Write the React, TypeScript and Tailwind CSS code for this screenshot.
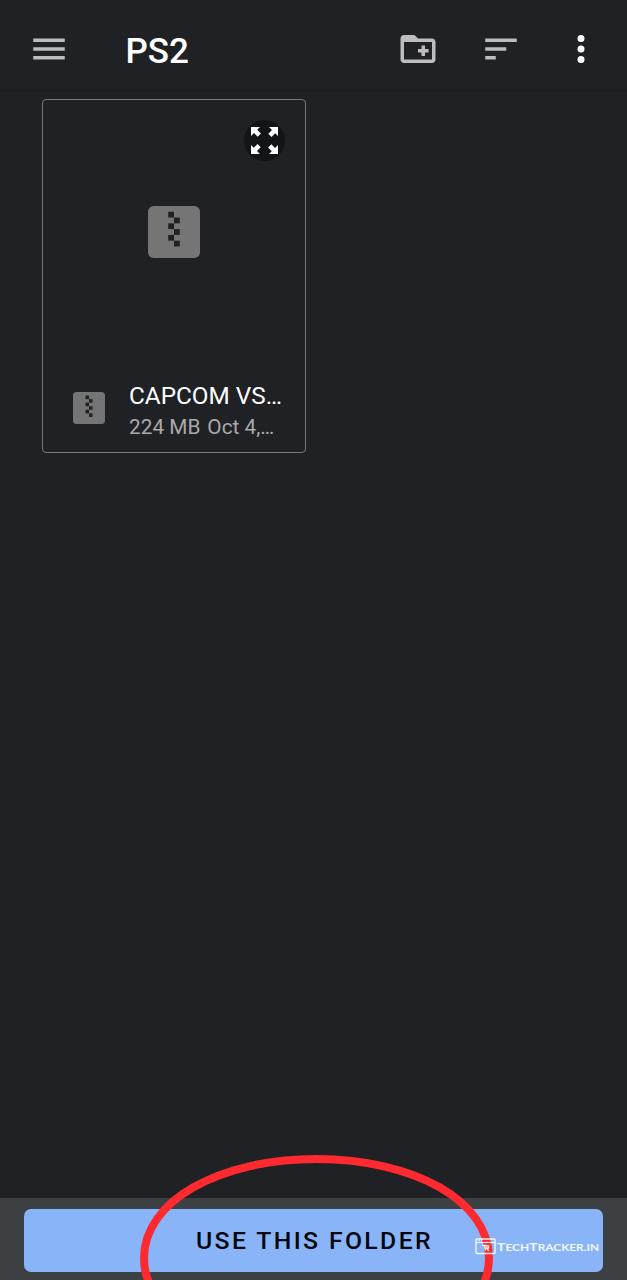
import type { ReactNode } from "react";

function Icon({ children, className }: { children: ReactNode; className?: string }) {
  return (
    <svg viewBox="0 0 24 24" className={`size-[42px] fill-[#bdbdbd] ${className ?? ""}`}>
      {children}
    </svg>
  );
}

function ZipIcon({ className }: { className: string }) {
  return (
    <svg viewBox="0 0 18 18" className={className}>
      <rect width="18" height="18" rx="2" fill="#757575" />
      {[2, 4, 6, 8, 10, 12].map((y, i) => (
        <rect key={y} x={i % 2 ? 9 : 7} y={y} width="2" height="2" fill="#202124" />
      ))}
    </svg>
  );
}

function TopBar() {
  return (
    <header className="flex h-[91px] items-start border-b border-[#1c1d1f] pt-7 pr-[25px] pl-[27.5px]">
      <button aria-label="Menu" className="h-[42px]">
        <Icon>
          <path d="M3 18h18v-2H3v2zm0-5h18v-2H3v2zm0-7v2h18V6H3z" />
        </Icon>
      </button>
      <h1 className="ml-[56px] flex-1 pt-[2px] text-[35px] leading-[44px] font-medium text-white">PS2</h1>
      <button aria-label="New folder" className="mr-[41.5px] h-[42px]">
        <Icon>
          <path
            fillRule="evenodd"
            d="M20 6h-8l-2-2H4c-1.11 0-1.99.89-1.99 2L2 18c0 1.11.89 2 2 2h16c1.11 0 2-.89 2-2V8c0-1.11-.89-2-2-2zm0 12H4V8h16v10zM12 14h2v2h2v-2h2v-2h-2v-2h-2v2h-2v2z"
          />
        </Icon>
      </button>
      <button aria-label="Sort" className="mr-[38px] h-[42px]">
        <Icon>
          <path d="M3 18h6v-2H3v2zM3 6v2h18V6H3zm0 7h12v-2H3v2z" />
        </Icon>
      </button>
      <button aria-label="More options" className="h-[42px]">
        <Icon>
          <g fill="#fff">
            <circle cx="12" cy="6" r="2" />
            <circle cx="12" cy="12" r="2" />
            <circle cx="12" cy="18" r="2" />
          </g>
        </Icon>
      </button>
    </header>
  );
}

function FileCard() {
  return (
    <article className="relative mt-2 ml-[42px] flex h-[354px] w-[264px] flex-col rounded-[4px] border border-[#77787b]">
      <div className="flex h-[264px] items-center justify-center">
        <ZipIcon className="size-[52px]" />
      </div>
      <button
        aria-label="Preview"
        className="absolute top-5 right-5 flex size-[41px] items-center justify-center rounded-full bg-[#131416]"
      >
        <svg viewBox="0 0 27 27" className="size-[27px] fill-white">
          {[0, 90, 180, 270].map((angle) => (
            <path
              key={angle}
              transform={`rotate(${angle} 13.5 13.5)`}
              d="M0 0h9L6.2 2.8l3.7 3.7-3.2 3.2L3 6 0 9z"
            />
          ))}
        </svg>
      </button>
      <div className="flex flex-1 items-start pt-4 pl-[30px]">
        <ZipIcon className="mt-3 size-8" />
        <div className="ml-6 whitespace-nowrap">
          <p className="text-[24.3px] leading-[32px] text-white">CAPCOM VS…</p>
          <p className="flex gap-[7px] text-[20.8px] leading-[30px] text-[#a9aaac]">
            <span>224 MB</span>
            <span>Oct 4,…</span>
          </p>
        </div>
      </div>
    </article>
  );
}

function Watermark() {
  return (
    <div className="absolute top-[1237px] left-[475px] flex items-center text-white/90">
      <svg viewBox="0 0 21 17" className="h-[17px] w-[21px] shrink-0" fill="none" stroke="currentColor">
        <rect x="1" y="1" width="19" height="14.5" rx="1" strokeWidth="1.4" />
        <path d="M1 4.5h19" strokeWidth="1.2" />
        <path d="M3 2.7h2M6 2.7h1" strokeWidth="0.8" />
        <path d="M7 7.5h5M9.5 7.5l1 5M11 8h2.5v2H11l3 2.8" strokeWidth="1.4" />
      </svg>
      <svg viewBox="0 0 104 18" className="h-[18px] w-[104px] fill-current font-['Lato',sans-serif] font-bold">
        <text transform="translate(0.8 14.3) scale(1.15 1)" fontSize="12.2" textLength="89" lengthAdjust="spacingAndGlyphs">
          T<tspan fontSize="10">ECH</tspan>T<tspan fontSize="10">RACKER.IN</tspan>
        </text>
      </svg>
    </div>
  );
}

export default function App() {
  return (
    <div className="relative flex h-[1280px] w-[627px] flex-col overflow-hidden bg-[#202124] font-['Roboto',sans-serif]">
      <TopBar />
      <main className="flex-1">
        <FileCard />
      </main>
      <footer className="h-[82px] bg-[#3c4043] px-6 pt-[10.5px]">
        <button className="flex h-[63px] w-[579px] items-center justify-center rounded-[7px] bg-[#8ab4f8] pt-[2px] pl-[2px] text-[24.8px] font-medium tracking-[2.35px] text-[#05070f]">
          USE THIS FOLDER
        </button>
      </footer>
      <svg viewBox="0 0 627 1280" className="pointer-events-none absolute inset-0 h-full w-full">
        <path
          d="M144 1258C144 1201.500 218.200 1159 316.500 1159S489 1201.500 489 1258S414.800 1357 316.500 1357S144 1314.500 144 1258Z"
          fill="none"
          stroke="#ff2a2f"
          strokeWidth="8"
        />
      </svg>
      <Watermark />
    </div>
  );
}
